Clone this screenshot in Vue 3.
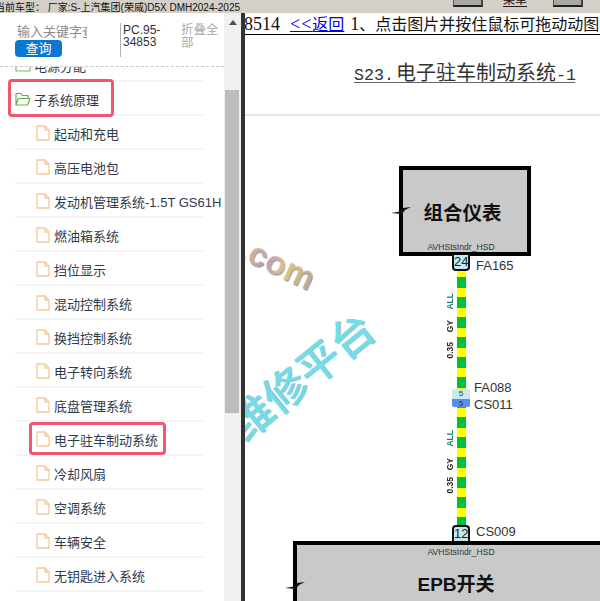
<template>
  <div class="page">
    <div class="topbar">
      <span class="car">当前车型： 厂家:S-上汽集团(荣威)D5X DMH2024-2025</span>
      <span class="tool-btn first"></span>
      <span class="menu">菜单</span>
      <span class="tool-btn"></span>
    </div>

    <div class="main">
      <aside class="side">
        <div class="side-panel">
          <div class="search">
            <div class="search-left">
              <div class="keyword">输入关键字查询</div>
              <button class="query">查询</button>
            </div>
            <div class="pc">PC.95-34853</div>
            <div class="fold">折叠全部</div>
          </div>
          <div class="tree">
            <div class="row lv1 clipped">
              <svg class="ico" viewBox="0 0 16 14"><path d="M1 2h5l1.500 2H15V13H1z" fill="none" stroke="#7dbb6c" stroke-width="1.200"/></svg>
              <span>电源分配</span>
            </div>
            <div class="row lv1">
              <svg class="ico" viewBox="0 0 16 14"><path d="M1 13V1.500h5l1.500 2h5.500v3M1 13h11.500L15 6.500H3.500z" fill="none" stroke="#62b04f" stroke-width="1.200" stroke-linejoin="round"/></svg>
              <span>子系统原理</span>
              <i class="mark mark-root"></i>
            </div>
            <div v-for="item in items" :key="item" class="row lv2">
              <svg class="ico file" viewBox="0 0 14 16"><path d="M1 1h8l4 4v10H1zM9 1v4h4" fill="none" stroke="#f6c995" stroke-width="1.300" stroke-linejoin="round"/></svg>
              <span>{{ item }}</span>
              <i v-if="item === '电子驻车制动系统'" class="mark mark-leaf"></i>
            </div>
          </div>
        </div>
        <div class="scrollbar">
          <svg class="arrow" viewBox="0 0 8 5"><path d="M4 0l4 5H0z" fill="#505050"/></svg>
          <div class="thumb"></div>
        </div>
      </aside>

      <section class="content">
        <div class="toolbar">
          <span class="num">8514</span>
          <a class="back"><span class="num lt">&lt;&lt;</span>返回</a>
          <span><span class="num">1</span>、点击图片并按住鼠标可拖动动图</span>
        </div>
        <div class="canvas">
          <div class="title"><span class="mono">S23.</span>电子驻车制动系统<span class="mono">-1</span></div>
          <div class="rule"></div>

          <div class="wm wm-com">.com</div>
          <div class="wm wm-cn">维修平台</div>

          <div class="box box-top">
            <b class="box-name">组合仪表</b>
            <span class="pin-name">AVHStsIndr_HSD</span>
          </div>
          <svg class="ground g1" viewBox="0 0 20 8"><path d="M0 6L9 4.500 12 1 20 0 14 3 11 7z" fill="#111"/></svg>

          <div class="wire"></div>
          <div class="conn c24">24</div>
          <div class="code fa165">FA165</div>
          <div class="conn-mid"><span class="u">5</span><span class="d">5</span></div>
          <div class="code fa088">FA088</div>
          <div class="code cs011">CS011</div>
          <div class="conn c12">12</div>
          <div class="code cs009">CS009</div>

          <div v-for="l in wireLabels" :key="l.key" class="wire-label" :class="l.cls" :style="{ top: l.top + 'px' }">{{ l.text }}</div>

          <div class="box box-epb">
            <span class="pin-name epb-pin">AVHStsIndr_HSD</span>
            <b class="box-name epb-name">EPB开关</b>
          </div>
          <svg class="ground g2" viewBox="0 0 20 8"><path d="M0 6L9 4.500 12 1 20 0 14 3 11 7z" fill="#111"/></svg>
        </div>
      </section>
    </div>
  </div>
</template>

<script setup>
const items = [
  '起动和充电',
  '高压电池包',
  '发动机管理系统-1.5T GS61H',
  '燃油箱系统',
  '挡位显示',
  '混动控制系统',
  '换挡控制系统',
  '电子转向系统',
  '底盘管理系统',
  '电子驻车制动系统',
  '冷却风扇',
  '空调系统',
  '车辆安全',
  '无钥匙进入系统'
]

const wireLabels = [
  { key: 'a1', text: 'ALL', cls: 'teal', top: 258 },
  { key: 'g1', text: 'GY', cls: '', top: 285 },
  { key: 's1', text: '0.35', cls: '', top: 307 },
  { key: 'a2', text: 'ALL', cls: 'teal', top: 395 },
  { key: 'g2', text: 'GY', cls: '', top: 423 },
  { key: 's2', text: '0.35', cls: '', top: 442 }
]
</script>

<style>
html, body {
  margin: 0;
  background: #fff;
  overflow: hidden;
}
</style>

<style scoped>
.page {
  width: 600px;
  height: 601px;
  display: flex;
  flex-direction: column;
  overflow: hidden;
  font-family: "Liberation Sans", "Noto Sans CJK SC", sans-serif;
}

.topbar {
  height: 13px;
  flex: none;
  display: flex;
  background: #d4d0c8;
  overflow: hidden;
  font-size: 10px;
  line-height: 16px;
  color: #111;
  white-space: nowrap;
}
.car {
  width: 453px;
  flex: none;
  margin-left: -5px;
  margin-right: 5px;
}
.tool-btn {
  width: 30px;
  height: 7px;
  flex: none;
  box-sizing: border-box;
  background: #a9a9a4;
  border-right: 2px solid #444;
  border-bottom: 2px solid #222;
  border-left: 1px solid #555;
}
.first {
  margin-right: 20px;
}
.menu {
  width: 24px;
  margin-right: 26px;
  font-size: 12px;
  line-height: 12px;
  margin-top: -6px;
  height: 12px;
  border-bottom: 1px solid #222;
}

.main {
  flex: 1;
  min-height: 0;
  display: flex;
}

.side {
  width: 241px;
  flex: none;
  display: flex;
  background: #fff;
}
.side-panel {
  width: 224px;
  flex: none;
  display: flex;
  flex-direction: column;
}
.search {
  height: 54px;
  flex: none;
  box-sizing: border-box;
  padding: 10px 6px 0 15px;
  display: flex;
  align-items: flex-start;
  border-bottom: 1px dashed #c8c8c8;
}
.search-left {
  width: 106px;
  flex: none;
  height: 34px;
  box-sizing: border-box;
  padding-right: 18px;
  border-right: 1px solid #b0b0b0;
  overflow: hidden;
}
.keyword {
  margin-left: 2px;
  height: 17px;
  width: 70px;
  overflow: hidden;
  white-space: nowrap;
  font-size: 13px;
  line-height: 17px;
  color: #8a8a8a;
}
.query {
  display: block;
  width: 47px;
  height: 17px;
  padding: 0;
  border: 0;
  border-radius: 4px;
  background: #0a78d2;
  color: #fff;
  font-family: inherit;
  font-size: 13px;
  line-height: 17px;
}
.pc {
  width: 46px;
  margin-left: 2px;
  margin-top: 1px;
  flex: none;
  font-size: 12px;
  line-height: 12px;
  color: #333;
}
.fold {
  width: 38px;
  margin-left: 12px;
  margin-top: 1px;
  flex: none;
  font-size: 12.500px;
  line-height: 13px;
  color: #aaa;
}

.tree {
  flex: 1;
  min-height: 0;
  overflow: hidden;
}
.row {
  position: relative;
  height: 34px;
  width: 188px;
  margin-left: 15px;
  box-sizing: border-box;
  padding-top: 2px;
  border-bottom: 2px solid #f5f5f5;
  display: flex;
  align-items: center;
  white-space: nowrap;
  font-size: 13px;
  color: #2f3a4a;
}
.clipped {
  margin-top: -19px;
}
.ico {
  width: 16px;
  height: 14px;
  flex: none;
  margin-right: 3px;
}
.lv2 {
  padding-left: 21px;
}
.file {
  width: 14px;
  height: 16px;
  margin-right: 4px;
}

.mark {
  position: absolute;
  box-sizing: border-box;
  border: 3px solid #f0566e;
  border-radius: 4px;
}
.mark-root {
  left: -7px;
  top: -3px;
  width: 106px;
  height: 38px;
}
.mark-leaf {
  left: 14px;
  top: 0;
  width: 137px;
  height: 33px;
}

.scrollbar {
  width: 17px;
  flex: none;
  position: relative;
  background: #f0f0f0;
}
.arrow {
  position: absolute;
  left: 5px;
  top: 7px;
  width: 8px;
  height: 5px;
}
.thumb {
  position: absolute;
  left: 1px;
  top: 77px;
  width: 14px;
  height: 323px;
  background: #bdbdbd;
}

.content {
  flex: 1;
  min-width: 0;
  display: flex;
  flex-direction: column;
  border-left: 4px solid #333;
  overflow: hidden;
}
.toolbar {
  height: 22px;
  flex: none;
  box-sizing: border-box;
  margin-left: -1px;
  border-bottom: 1px solid #000;
  white-space: nowrap;
  font-size: 16px;
  line-height: 23px;
  color: #111;
  display: flex;
  gap: 6px;
}
.num {
  font-family: "Liberation Serif", serif;
  font-size: 18px;
}
.lt {
  letter-spacing: 1px;
}
.back {
  margin-left: 4px;
  color: #0000ee;
  text-decoration: underline;
}

.canvas {
  position: relative;
  flex: 1;
  min-height: 0;
}
.title {
  position: absolute;
  left: 109px;
  top: 28px;
  width: 221px;
  height: 19px;
  border-bottom: 1px solid #666;
  font-size: 20px;
  line-height: 20px;
  color: #333;
  white-space: nowrap;
}
.mono {
  font-family: "Liberation Mono", monospace;
  font-size: 16.670px;
}
.title .mono:first-child {
  margin-right: 2px;
}
.rule {
  position: absolute;
  left: 0;
  right: 0;
  top: 79px;
  height: 2px;
  background: #e4e4e4;
}

.wm {
  position: absolute;
  font-weight: 700;
  white-space: nowrap;
}
.wm-com {
  left: -7px;
  top: 208px;
  width: 84px;
  font-size: 34px;
  line-height: 42px;
  transform: rotate(25deg);
  background: linear-gradient(90deg, #d8c46a, #c49ac0 35%, #d9c878 60%, #b9a0a0);
  -webkit-background-clip: text;
  background-clip: text;
  color: transparent;
  filter: drop-shadow(1px 1px 0 #999);
}
.wm-cn {
  left: -29px;
  top: 318px;
  width: 172px;
  font-size: 43px;
  line-height: 48px;
  font-weight: 500;
  color: #72dde8;
  text-shadow: 1px 1px 0 #a9c4c8;
  transform: rotate(-39deg);
}

.box {
  position: absolute;
  box-sizing: border-box;
  background: #c9c9c9;
  border: 4px solid #000;
}
.box-top {
  left: 154px;
  top: 131px;
  width: 132px;
  height: 90px;
  display: flex;
  flex-direction: column;
  align-items: center;
}
.box-name {
  font-size: 19.500px;
  line-height: 26px;
  color: #111;
}
.box-top .box-name {
  margin-top: 30px;
  margin-right: 5px;
}
.pin-name {
  font-size: 8.600px;
  line-height: 11px;
  color: #333;
  white-space: nowrap;
}
.box-top .pin-name {
  margin-top: auto;
  margin-bottom: -1px;
  margin-right: 8px;
}
.box-epb {
  left: 48px;
  top: 506px;
  width: 340px;
  height: 90px;
  border-right: 0;
  display: flex;
  flex-direction: column;
  align-items: center;
}
.epb-pin {
  margin-top: 2px;
  margin-right: 8px;
}
.epb-name {
  margin-top: 14px;
  margin-right: 18px;
  font-size: 19px;
}

.ground {
  position: absolute;
  width: 20px;
  height: 8px;
}
.g1 {
  left: 146px;
  top: 172px;
}
.g2 {
  left: 40px;
  top: 547px;
}

.wire {
  position: absolute;
  left: 212px;
  top: 236px;
  width: 9px;
  height: 254px;
  background: repeating-linear-gradient(180deg, #ffff00 0 6px, #00c040 6px 17px, #ffff00 17px 20px);
}
.conn {
  position: absolute;
  left: 207px;
  width: 18px;
  height: 16px;
  box-sizing: border-box;
  border: 2px solid #111;
  background: #c6eaf0;
  font-size: 13px;
  line-height: 13px;
  text-align: center;
  color: #222;
}
.c24 {
  top: 220px;
  border-top: 0;
  border-radius: 0 0 4px 4px;
}
.c12 {
  top: 490px;
  border-bottom: 0;
  border-radius: 4px 4px 0 0;
}
.conn-mid {
  position: absolute;
  left: 207px;
  top: 354px;
  width: 18px;
  height: 18px;
  display: flex;
  flex-direction: column;
  font-size: 8px;
  line-height: 9px;
  text-align: center;
  color: #333;
}
.conn-mid .u {
  height: 10px;
  background: #c6eaf0;
  border-radius: 3px 3px 0 0;
}
.conn-mid .d {
  height: 8px;
  background: #5c8ee8;
  border-radius: 0 0 2px 2px;
}
.code {
  position: absolute;
  left: 229px;
  font-size: 13px;
  line-height: 15px;
  color: #333;
}
.fa165 {
  top: 223px;
  left: 231px;
}
.fa088 {
  top: 345px;
}
.cs011 {
  top: 362px;
}
.cs009 {
  top: 489px;
  left: 231px;
}
.wire-label {
  position: absolute;
  left: 200px;
  writing-mode: vertical-rl;
  transform: rotate(180deg);
  font-size: 8.500px;
  font-weight: 700;
  line-height: 10px;
  color: #222;
}
.teal {
  color: #1d7f78;
}
</style>
